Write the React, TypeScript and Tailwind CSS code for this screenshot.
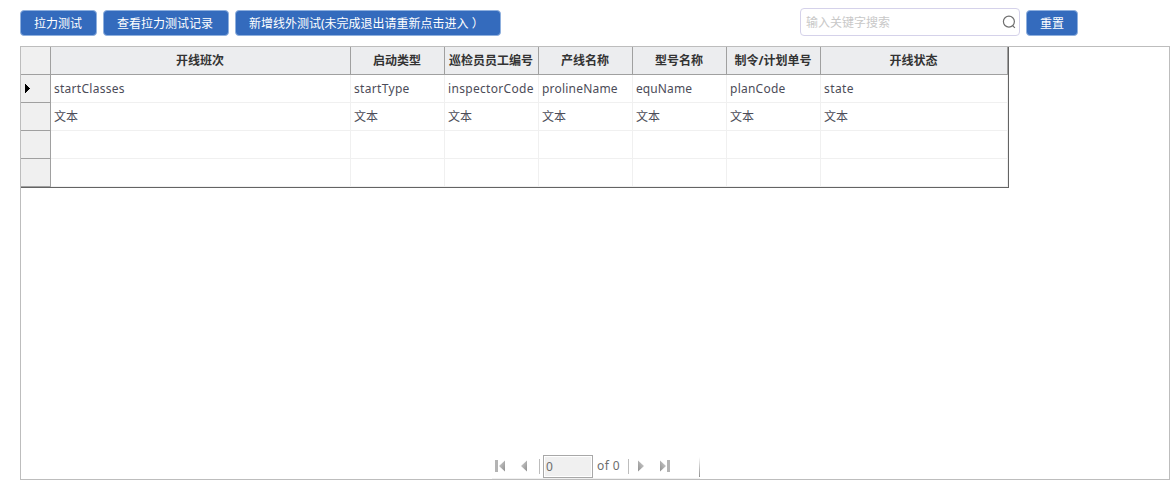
import React from "react";

type Column = { title: string; field: string; width: string; tracking: string };

const columns: Column[] = [
  { title: "开线班次", field: "startClasses", width: "w-[300px]", tracking: "tracking-[0.27px]" },
  { title: "启动类型", field: "startType", width: "w-[94px]", tracking: "tracking-[0.32px]" },
  { title: "巡检员员工编号", field: "inspectorCode", width: "w-[94px]", tracking: "tracking-[0.32px]" },
  { title: "产线名称", field: "prolineName", width: "w-[94px]", tracking: "tracking-[0.2px]" },
  { title: "型号名称", field: "equName", width: "w-[94px]", tracking: "tracking-[0.1px]" },
  { title: "制令/计划单号", field: "planCode", width: "w-[94px]", tracking: "tracking-[0.25px]" },
  { title: "开线状态", field: "state", width: "w-[187px]", tracking: "tracking-[0.4px]" },
];

function Button({ className, children }: { className: string; children: React.ReactNode }) {
  return (
    <button
      className={`mt-[2px] flex h-[26px] shrink-0 items-center whitespace-nowrap rounded-[4px] border border-[#8fb0de] bg-[#346bbd] pl-[13px] pt-[2px] text-[12px] leading-none text-white ${className}`}
    >
      {children}
    </button>
  );
}

function Toolbar() {
  return (
    <div className="flex h-[28px] items-start">
      <Button className="w-[77px]">拉力测试</Button>
      <Button className="ml-[6px] w-[126px]">查看拉力测试记录</Button>
      <Button className="ml-[6px] w-[266px]">新增线外测试(未完成退出请重新点击进入 ）</Button>
      <div className="ml-[299px] flex h-[28px] w-[220px] items-center justify-between rounded-[4px] border border-[#d5d2ea] pl-[5px] pr-[3px]">
        <span className="pt-[2px] text-[12px] leading-none text-[#c8c8c8]">输入关键字搜索</span>
        <svg width="14" height="14" viewBox="0 0 14 14" fill="none" stroke="#6f6f6f" strokeWidth="1.2">
          <circle cx="6.9" cy="6.6" r="5.5" />
          <path d="M10.6 10.6 L12.9 12.9" />
        </svg>
      </div>
      <Button className="ml-[6px] w-[52px]">重置</Button>
    </div>
  );
}

function RowHead({ active }: { active?: boolean }) {
  return (
    <div className="flex h-[28px] w-[30px] items-center border-b border-r border-[#a0a0a0] bg-[#f0f0f0] pl-1">
      {active && (
        <svg width="5" height="9" viewBox="0 0 5 9" shapeRendering="crispEdges">
          <path d="M0 0 L5 4.5 L0 9 Z" fill="#000" />
        </svg>
      )}
    </div>
  );
}

function Grid() {
  const rows: ((c: Column) => string)[] = [(c) => c.field, () => "文本", () => "", () => ""];
  return (
    <div className="w-[988px] border-b border-r border-[#646464]">
      <div className="flex">
        <RowHead />
        {columns.map((c) => (
          <div
            key={c.field}
            className={`flex h-[28px] items-center justify-center whitespace-nowrap border-b border-r border-[#a0a0a0] bg-[#ecedef] pr-px text-[12px] font-bold leading-none text-[#333] ${c.width}`}
          >
            {c.title}
          </div>
        ))}
      </div>
      {rows.map((value, i) => (
        <div key={i} className="flex">
          <RowHead active={i === 0} />
          {columns.map((c) => (
            <div
              key={c.field}
              className={`flex h-[28px] items-center whitespace-nowrap border-b border-r border-[#f0f0f0] pl-[3px] text-[12px] leading-none text-[#4c4c58] ${i === 0 ? c.tracking : ""} ${c.width}`}
            >
              {value(c)}
            </div>
          ))}
        </div>
      ))}
    </div>
  );
}

function Arrow({ flip, bar }: { flip?: boolean; bar?: boolean }) {
  return (
    <svg
      width={bar ? 11 : 7}
      height="12"
      viewBox={bar ? "0 0 11 12" : "4 0 7 12"}
      className={flip ? "-scale-x-100" : ""}
    >
      <defs>
        <linearGradient id="arrowFill" x1="0" y1="0" x2="1" y2="1">
          <stop offset="0" stopColor="#d2d2d2" />
          <stop offset="1" stopColor="#8e8e8e" />
        </linearGradient>
      </defs>
      {bar && <rect x="0" y="0" width="3" height="12" fill="#b4b4b4" />}
      <path d="M10 0.5 V11.5 L4 6 Z" fill="url(#arrowFill)" />
    </svg>
  );
}

function Pager() {
  return (
    <div className="ml-[471px] flex h-[24px] w-[208px] items-center border-b border-[#f0f0f0] pl-[3px] text-[12px] leading-none text-[#6d6d6d]">
      <div className="flex pb-[2px]">
        <Arrow bar />
      </div>
      <div className="ml-[15px] flex pb-[2px]">
        <Arrow />
      </div>
      <div className="ml-[11px] h-[15px] w-px bg-[#bdbdbd]" />
      <div className="ml-[3px] flex h-[23px] w-[50px] items-center border border-[#a8a8a8] bg-white p-px">
        <span className="flex h-full w-full items-center bg-[#f0f0f0] pl-px">0</span>
      </div>
      <span className="ml-[4px] w-[24px] whitespace-nowrap pb-[2px] tracking-[0.4px]">of 0</span>
      <div className="ml-[7px] h-[15px] w-px bg-[#bdbdbd]" />
      <div className="ml-[8px] flex pb-[2px]">
        <Arrow flip />
      </div>
      <div className="ml-[15px] flex pb-[2px]">
        <Arrow flip bar />
      </div>
      <div className="ml-auto h-[20px] w-px bg-linear-to-b from-white to-[#909090]" />
    </div>
  );
}

export default function App() {
  return (
    <div className="flex h-[480px] w-[1170px] flex-col overflow-hidden bg-white pl-5 pt-2 font-['Noto_Sans','Noto_Sans_CJK_SC',sans-serif]">
      <Toolbar />
      <div className="mt-[10px] flex h-[434px] w-[1150px] flex-col justify-between border border-[#bdbdbd]">
        <Grid />
        <Pager />
      </div>
    </div>
  );
}
